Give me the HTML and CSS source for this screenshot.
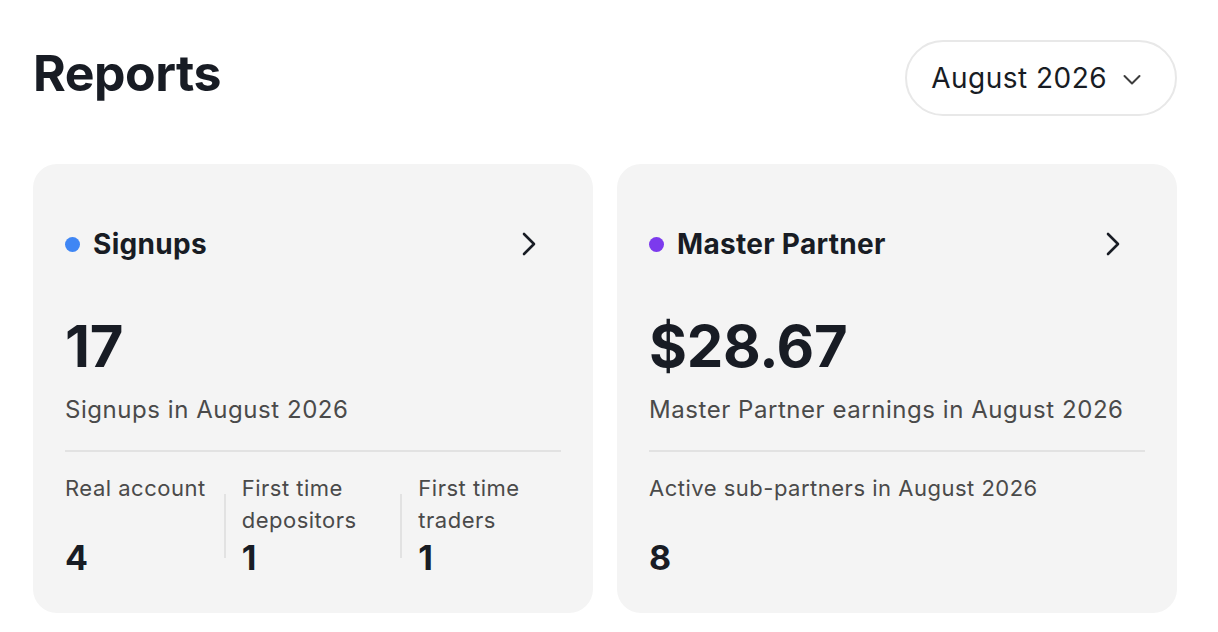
FILE: index.html
```html
<!DOCTYPE html>
<html lang="en">
<head>
<meta charset="utf-8">
<title>Reports</title>
<link rel="stylesheet" href="styles.css">
</head>
<body>
<main class="page">
  <header class="page-head">
    <h1 class="page-title">Reports</h1>
    <button class="month-select" type="button">
      <span>August 2026</span>
      <svg class="month-caret" width="24" height="24" viewBox="0 0 24 24" aria-hidden="true"><polyline points="4.5,9 12,16.5 19.5,9" fill="none" stroke="currentColor" stroke-width="2" stroke-linecap="round" stroke-linejoin="round"/></svg>
    </button>
  </header>

  <section class="cards">
    <article class="card">
      <div class="card-head">
        <span class="dot dot-blue"></span>
        <h2 class="card-title">Signups</h2>
        <svg class="card-arrow" width="24" height="24" viewBox="0 0 24 24" aria-hidden="true"><polyline points="7,2 17,12 7,22" fill="none" stroke="currentColor" stroke-width="2.6" stroke-linecap="round" stroke-linejoin="round"/></svg>
      </div>
      <div class="card-value">17</div>
      <p class="card-caption">Signups in August 2026</p>
      <hr class="card-rule">
      <div class="stats">
        <div class="stat">
          <span class="stat-label">Real account</span>
          <span class="stat-value">4</span>
        </div>
        <span class="stat-sep"></span>
        <div class="stat">
          <span class="stat-label">First time depositors</span>
          <span class="stat-value">1</span>
        </div>
        <span class="stat-sep"></span>
        <div class="stat">
          <span class="stat-label">First time traders</span>
          <span class="stat-value">1</span>
        </div>
      </div>
    </article>

    <article class="card">
      <div class="card-head">
        <span class="dot dot-purple"></span>
        <h2 class="card-title">Master Partner</h2>
        <svg class="card-arrow" width="24" height="24" viewBox="0 0 24 24" aria-hidden="true"><polyline points="7,2 17,12 7,22" fill="none" stroke="currentColor" stroke-width="2.6" stroke-linecap="round" stroke-linejoin="round"/></svg>
      </div>
      <div class="card-value">$28.67</div>
      <p class="card-caption">Master Partner earnings in August 2026</p>
      <hr class="card-rule">
      <div class="stats">
        <div class="stat">
          <span class="stat-label">Active sub-partners in August 2026</span>
          <span class="stat-value">8</span>
        </div>
      </div>
    </article>
  </section>
</main>
</body>
</html>
```

FILE: styles.css
```css
* {
  box-sizing: border-box;
}

body {
  margin: 0;
  background: #ffffff;
  color: #181c24;
  font-family: Inter, "Noto Sans", sans-serif;
}

.page {
  padding: 40px 41px 0 33px;
}

.page-head {
  display: flex;
  justify-content: space-between;
  align-items: flex-start;
}

.page-title {
  margin: 3px 0 0;
  font-size: 50px;
  line-height: 60px;
  font-weight: 700;
  letter-spacing: -0.01em;
}

.month-select {
  display: flex;
  align-items: center;
  gap: 13px;
  height: 76px;
  padding: 0 31px 0 24px;
  border: 2px solid #e8e8e8;
  border-radius: 999px;
  background: #ffffff;
  color: #181c24;
  font-family: inherit;
  font-size: 28px;
  letter-spacing: 0.46px;
}

.month-caret {
  color: #3d3d3d;
  margin-top: 2px;
}

.cards {
  display: grid;
  grid-template-columns: 1fr 1fr;
  gap: 24px;
  margin-top: 48px;
}

.card {
  height: 449px;
  padding: 32px;
  border-radius: 24px;
  background: #f4f4f4;
  display: flex;
  flex-direction: column;
}

.card-head {
  display: flex;
  align-items: center;
  height: 96px;
  padding-right: 20px;
}

.dot {
  width: 15px;
  height: 15px;
  border-radius: 50%;
  margin-right: 13px;
}

.dot-blue {
  background: #3f86f4;
}

.dot-purple {
  background: #7c3aed;
}

.card-title {
  margin: 0;
  flex: 1;
  font-size: 28px;
  font-weight: 700;
  letter-spacing: 0.3px;
}

.card-arrow {
  color: #181c24;
}

.card-value {
  margin-top: 22px;
  font-size: 58px;
  line-height: 64px;
  font-weight: 700;
  letter-spacing: -0.005em;
}

.card-caption {
  margin: 16px 0 0;
  font-size: 24px;
  line-height: 32px;
  color: #4a4a4a;
  letter-spacing: 0.55px;
}

.card-rule {
  margin: 24px 0 0;
  border: 0;
  border-top: 2px solid #e2e2e2;
}

.stats {
  display: flex;
  margin-top: 20px;
  flex: 1;
}

.stat {
  flex: 1;
  display: flex;
  flex-direction: column;
  justify-content: space-between;
}

.stat-label {
  font-size: 22px;
  line-height: 32px;
  color: #4a4a4a;
  letter-spacing: 0.5px;
}

.stat-value {
  font-size: 34px;
  line-height: 40px;
  font-weight: 700;
  margin-bottom: 3px;
}

.stat-sep {
  width: 2px;
  margin: 22px 16px 23px;
  background: #e2e2e2;
}
```
